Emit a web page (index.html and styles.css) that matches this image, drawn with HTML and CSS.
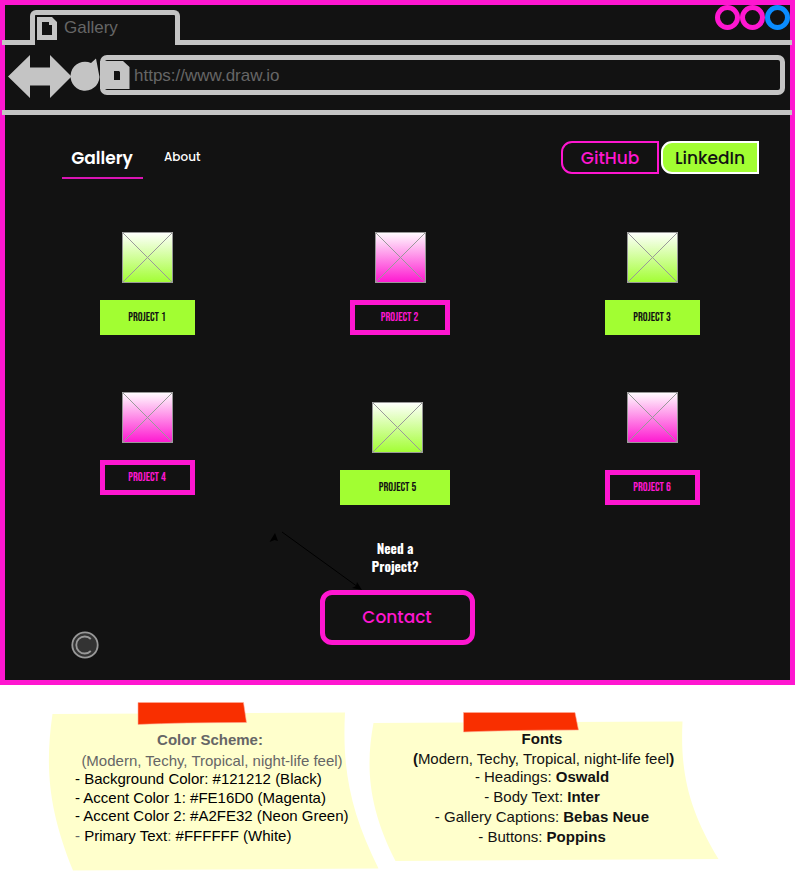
FILE: index.html
```html
<!DOCTYPE html>
<html lang="en">
<head>
<meta charset="utf-8">
<title>Gallery</title>
<link rel="stylesheet" href="styles.css">
</head>
<body>
<main class="window">
  <header class="tabs">
    <div class="tab">
      <svg class="tab-icon" width="20" height="24" viewBox="0 0 20 24"><path fill-rule="evenodd" d="M0 0H15L20 5V23H0ZM5 5V18H15V8H12V5Z"/></svg>
      <span>Gallery</span>
    </div>
    <div class="controls"><i></i><i></i><i class="blue"></i></div>
  </header>
  <div class="toolbar">
    <svg class="arrows" width="92" height="44" viewBox="0 0 92 44"><path d="M0 21.5L22 0V12.5H42V0L63.5 21.5L42 43V30.5H22V43Z"/><path d="M83 8L88 3.500L91.500 22A14.500 14.500 0 1 1 83 8Z"/></svg>
    <div class="address">
      <svg width="30" height="30" viewBox="0 0 30 30"><path fill-rule="evenodd" d="M0 1H23L29.500 7V29H0ZM14 11V20H20V12L19 11Z"/></svg>
      <span>https://www.draw.io</span>
    </div>
  </div>
  <nav class="nav">
    <a class="current"><span>Gallery</span></a>
    <a class="about">About</a>
    <a class="button github">GitHub</a>
    <a class="button linkedin">LinkedIn</a>
  </nav>
  <section class="gallery">
    <figure class="green"><svg class="thumb" viewBox="0 0 51 51"><path d="M.5.5H50.500V50.500H.5ZL50.500 50.500M50.500.5L.5 50.500"/></svg><figcaption><span>PROJECT 1</span></figcaption></figure>
    <figure class="pink second"><svg class="thumb" viewBox="0 0 51 51"><path d="M.5.5H50.500V50.500H.5ZL50.500 50.500M50.500.5L.5 50.500"/></svg><figcaption><span>PROJECT 2</span></figcaption></figure>
    <figure class="green"><svg class="thumb" viewBox="0 0 51 51"><path d="M.5.5H50.500V50.500H.5ZL50.500 50.500M50.500.5L.5 50.500"/></svg><figcaption><span>PROJECT 3</span></figcaption></figure>
    <figure class="pink"><svg class="thumb" viewBox="0 0 51 51"><path d="M.5.5H50.500V50.500H.5ZL50.500 50.500M50.500.5L.5 50.500"/></svg><figcaption><span>PROJECT 4</span></figcaption></figure>
    <figure class="green fifth"><svg class="thumb" viewBox="0 0 51 51"><path d="M.5.5H50.500V50.500H.5ZL50.500 50.500M50.500.5L.5 50.500"/></svg><figcaption><span>PROJECT 5</span></figcaption></figure>
    <figure class="pink sixth"><svg class="thumb" viewBox="0 0 51 51"><path d="M.5.5H50.500V50.500H.5ZL50.500 50.500M50.500.5L.5 50.500"/></svg><figcaption><span>PROJECT 6</span></figcaption></figure>
  </section>
  <section class="contact">
    <svg class="pointer" width="96" height="62" viewBox="0 0 96 62"><path d="M12 2L88 57" stroke="#000" fill="none"/><path d="M5 3L8 11L4.500 10L-.5 12ZM92 60L82 58L86 56L87 52Z"/></svg>
    <h2>Need a<br>Project?</h2>
    <a class="contact-button">Contact</a>
    <svg class="copyright" width="28" height="28" viewBox="0 0 28 28"><circle cx="14" cy="14" r="12.700"/><path d="M19.800 8A8.500 8.500 0 1 0 19.800 20"/></svg>
  </section>
</main>
<section class="notes">
  <article class="note colors">
    <svg class="paper" width="332" height="172" viewBox="0 0 332 172"><path fill="#ffffcc" d="M4.500 12L297 10.500C294 69 303 111 330.500 166.500L25 168.500C0 107-3 64 4.500 12Z"/><path fill="#f92f00" stroke="#ffad99" stroke-width=".6" d="M90 .5H195.500L198.500 20.500Q135 20.500 90 22.500Z"/></svg>
    <h3>Color Scheme:</h3>
    <p class="mood">(Modern, Techy, Tropical, night-life feel)</p>
    <ul><li>- Background Color: #121212 (Black)</li><li>- Accent Color 1: #FE16D0 (Magenta)</li><li>- Accent Color 2: #A2FE32 (Neon Green)</li><li class="last"><i>-</i> Primary Text<i>:</i> #FFFFFF (White)</li></ul>
  </article>
  <article class="note fonts">
    <svg class="paper" width="352" height="152" viewBox="0 0 352 152"><path fill="#ffffcc" d="M4.500 11L313.500 9.500C311 61 320 98 349.500 147L26.500 149C0 97-4 56 4.500 11Z"/><path fill="#f92f00" stroke="#ffad99" stroke-width=".6" d="M94.500.5H206L209.500 18Q145 18 94.500 20Z"/></svg>
    <h3>Fonts</h3>
    <p class="mood"><b>(</b>Modern, Techy, Tropical, night-life feel<b>)</b></p>
    <p class="headings">- Headings: <b>Oswald</b></p>
    <p class="body-text">- Body Text: <b>Inter</b></p>
    <p class="captions">- Gallery Captions: <b>Bebas Neue</b></p>
    <p>- Buttons: <b>Poppins</b></p>
  </article>
</section>
</body>
</html>
```
FILE: styles.css
```css
* { box-sizing: border-box; }
body { margin: 0; width: 795px; height: 873px; overflow: hidden; background: #fff; font-family: "Liberation Sans", Arial, sans-serif; }
h2, h3, p, ul, figure { margin: 0; padding: 0; }
svg { display: block; flex: none; }
.window { height: 685px; border: 5px solid #fe16d0; background: #121212; }
.tabs { display: flex; justify-content: space-between; height: 40px; margin: 0 -2px 0 -3px; padding: 0 2px 0 28px; border-bottom: 5px solid #c4c4c4; }
.tab { display: flex; width: 150px; height: 35px; margin-top: 5px; padding: 2px; gap: 7px; border: 5px solid #c4c4c4; border-bottom: 0; border-radius: 6px 6px 0 0; background: #121212; color: #666; font-size: 17px; line-height: 22px; }
.tab, .address { fill: #c4c4c4; }
.controls { display: flex; }
.controls i { width: 25px; height: 25px; border: 5px solid #fe16d0; border-radius: 50%; }
.controls .blue { border-color: #0a8cff; }
.toolbar { display: flex; height: 70px; margin: 0 -2px 0 -3px; padding: 10px 7px 0 6px; border-bottom: 5px solid #c4c4c4; }
.arrows { fill: #c4c4c4; }
.address { display: flex; width: 685px; height: 40px; border: 5px solid #c4c4c4; border-radius: 7px; color: #666; font-size: 17px; line-height: 31px; }
.address svg { margin: 0 4px 0 -5px; }
.nav { display: flex; align-items: flex-start; height: 117px; padding: 26px 31px 0 57px; font-family: Poppins, Inter, sans-serif; color: #fff; }
.current { width: 81px; height: 38px; padding-right: 1px; border-bottom: 2px solid #d914b3; text-align: center; font-size: 17px; line-height: 35px; font-weight: 600; }
.about { margin: 0 auto 0 21px; font-size: 12px; line-height: 31px; font-weight: 500; }
.button { width: 98px; height: 33px; border: 2px solid #fe16d0; border-radius: 11px 0 0 11px; text-align: center; font-size: 17px; line-height: 31px; font-weight: 500; color: #fe16d0; }
.linkedin { margin-left: 2px; border-color: #fff; background: #a2fe32; color: #121212; }
.gallery { display: grid; grid-template-columns: 240px 265px 95px; grid-template-rows: 160px 138px; justify-items: start; padding-left: 95px; }
figure { width: 95px; }
.second { width: 100px; margin-left: 10px; }
.fifth { width: 110px; padding-top: 10px; }
.fifth .thumb { margin-left: 32px; }
.sixth figcaption { margin-top: 27px; }
.thumb { width: 51px; height: 51px; margin: 0 auto; fill: none; stroke: #999; }
.green .thumb { background: linear-gradient(#fff, #a2fe32); }
.pink .thumb { background: linear-gradient(#fff, #fe16d0); }
figcaption { height: 35px; margin-top: 17px; padding-right: 1px; text-align: center; line-height: 35px; font-family: "Bebas Neue", "Liberation Sans Narrow", "Liberation Sans", sans-serif; font-size: 12px; font-weight: normal; color: #121212; }
.green figcaption { background: #a2fe32; }
.pink figcaption { border: 5px solid #fe16d0; line-height: 25px; color: #fe16d0; }
.fifth figcaption { padding-left: 6px; }
.contact { position: relative; height: 150px; padding-top: 9px; color: #fff; }
.contact h2 { width: 140px; margin-left: 320px; text-align: center; font-family: Oswald, "Open Sans", sans-serif; font-size: 13.500px; line-height: 18px; }
.contact-button { display: block; width: 155px; height: 55px; margin: 15px 0 0 315px; padding-right: 1px; border: 5px solid #fe16d0; border-radius: 12px; text-align: center; color: #fe16d0; font: 500 17px/44px Poppins, Inter, sans-serif; }
.pointer { position: absolute; left: 265px; top: 0; overflow: visible; }
.copyright { position: absolute; left: 66px; top: 101px; fill: #333; stroke: #999; stroke-width: 1.800; }
.notes { display: flex; height: 188px; color: #000; font-size: 15px; }
.note { position: relative; }
.paper { position: absolute; z-index: -1; left: 0; top: 0; }
.note h3 { font-size: 15px; line-height: 20px; }
.note p { line-height: 20px; white-space: nowrap; }
.colors { width: 320px; height: 172px; margin: 17px 0 0 48px; padding-top: 28px; }
.colors h3, .colors .mood { width: 328px; color: #666; text-align: center; }
.colors h3 { width: 324px; }
.colors .mood { line-height: 22px; }
.colors ul { list-style: none; padding-left: 27px; line-height: 18.500px; white-space: nowrap; margin-top: -2px; }
.colors .last { margin-top: 1px; }
.colors i { font-style: normal; color: #666; }
.fonts { width: 352px; height: 152px; margin: 27px 0 0 1px; padding: 17px 6px 0 0; text-align: center; }
.fonts { color: #121212; }
.fonts .mood { margin-right: -3px; }
.fonts .headings { line-height: 17px; margin-top: -1px; }
.fonts .body-text { margin-top: 2px; }
```
